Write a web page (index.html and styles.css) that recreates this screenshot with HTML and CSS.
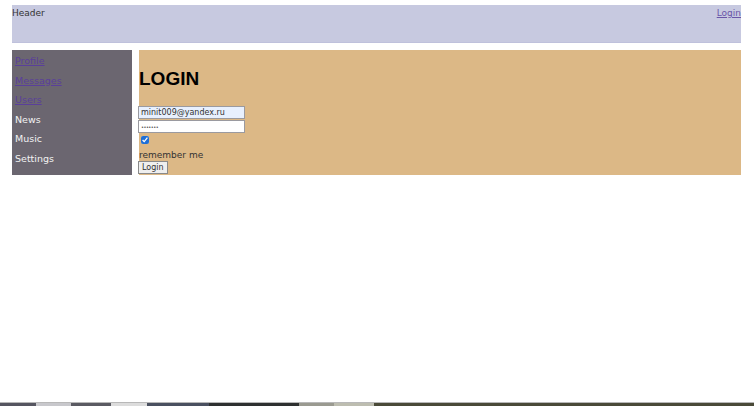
FILE: index.html
```html
<!DOCTYPE html>
<html>
<head>
<meta charset="utf-8">
<link rel="stylesheet" href="styles.css">
</head>
<body>
<div class="page">
  <div class="wrap">
    <header class="header">
      <span class="brand">Header</span>
      <a href="#" class="login-link">Login</a>
    </header>
    <div class="main">
      <nav class="nav">
        <a href="#" class="nav-link">Profile</a>
        <a href="#" class="nav-link">Messages</a>
        <a href="#" class="nav-link">Users</a>
        <span class="nav-item">News</span>
        <span class="nav-item">Music</span>
        <span class="nav-item">Settings</span>
      </nav>
      <section class="content">
        <h1 class="title">LOGIN</h1>
        <form class="form">
          <input class="field filled" type="text" value="minit009@yandex.ru">
          <input class="field pw" type="password" value="1234567">
          <input class="check" type="checkbox" checked>
          <span class="remember">remember me</span>
          <button class="btn" type="button">Login</button>
        </form>
      </section>
    </div>
  </div>
  <div class="taskbar">
    <span class="tb tb1"></span><span class="tb tb2"></span><span class="tb tb3"></span><span class="tb tb4"></span><span class="tb tb5"></span><span class="tb tb6"></span><span class="tb tb7"></span><span class="tb tb8"></span><span class="tb tb9"></span>
  </div>
</div>
</body>
</html>
```
FILE: styles.css
```css
html, body {
  margin: 0;
  padding: 0;
  background: #fff;
}
body {
  font-family: "DejaVu Sans", "Liberation Sans", sans-serif;
  font-size: 9px;
  color: #222;
}
.page {
  height: 406px;
  display: flex;
  flex-direction: column;
  justify-content: space-between;
}
.wrap {
  padding: 5px 13px 0 12px;
}
.header {
  height: 38px;
  background: #c7c9e0;
  display: flex;
  justify-content: space-between;
  align-items: flex-start;
  padding-top: 3px;
  box-sizing: border-box;
  border-bottom: 1px solid #bfc1dc;
}
.brand {
  color: #333;
  font-size: 9px;
}
.login-link {
  color: #6a55a8;
  font-size: 9px;
  text-decoration: underline;
}
.main {
  display: flex;
  gap: 7px;
  margin-top: 7px;
  height: 125px;
}
.nav {
  width: 120px;
  background: #6b6670;
  display: flex;
  flex-direction: column;
  padding: 5px 0 0 3px;
  box-sizing: border-box;
  gap: 7.5px;
}
.nav-link, .nav-item {
  font-size: 9.5px;
  line-height: 12px;
}
.nav-link {
  color: #5a3f9a;
  text-decoration: underline;
}
.nav-item {
  color: #f2f2f2;
}
.content {
  flex: 1;
  background: #dcb886;
  padding-top: 17px;
}
.title {
  margin: 0;
  font-family: "Liberation Sans", sans-serif;
  font-size: 19px;
  font-weight: bold;
  color: #000;
  line-height: 24px;
}
.form {
  display: flex;
  flex-direction: column;
  align-items: flex-start;
  margin-top: 15px;
}
.field {
  width: 107px;
  height: 13px;
  box-sizing: border-box;
  border: 1px solid #9a9aa0;
  font-size: 8px;
  font-family: "DejaVu Sans", sans-serif;
  padding: 0 2px;
  margin: 0 0 1px -1px;
  background: #fff;
  color: #333;
}
.field.pw {
  font-size: 5px;
  letter-spacing: -0.5px;
}
.field.filled {
  background: #e8f0fe;
}
.check {
  width: 8px;
  height: 8px;
  margin: 2px 0 0 2px;
  accent-color: #1f6fd6;
}
.remember {
  margin-top: 6px;
  font-size: 9px;
  color: #333;
  line-height: 11px;
}
.btn {
  margin: 0 0 0 -1px;
  font-size: 8px;
  font-family: "DejaVu Sans", sans-serif;
  padding: 0 3px;
  height: 13px;
  border: 1px solid #8a8a8a;
  background: #efefef;
  color: #333;
}
.taskbar {
  height: 4px;
  display: flex;
  border-top: 1px solid #b8b8b8;
  box-sizing: border-box;
}
.tb { height: 3px; }
.tb1 { width: 36px; background: #555560; }
.tb2 { width: 35px; background: #c8c8cc; }
.tb3 { width: 40px; background: #5a5a62; }
.tb4 { width: 36px; background: #dcdcdc; }
.tb5 { width: 62px; background: #4a5060; }
.tb6 { width: 90px; background: #2e3030; }
.tb7 { width: 35px; background: #9a9a90; }
.tb8 { width: 40px; background: #bdbdb0; }
.tb9 { flex: 1; background: #4a4a38; }
```
